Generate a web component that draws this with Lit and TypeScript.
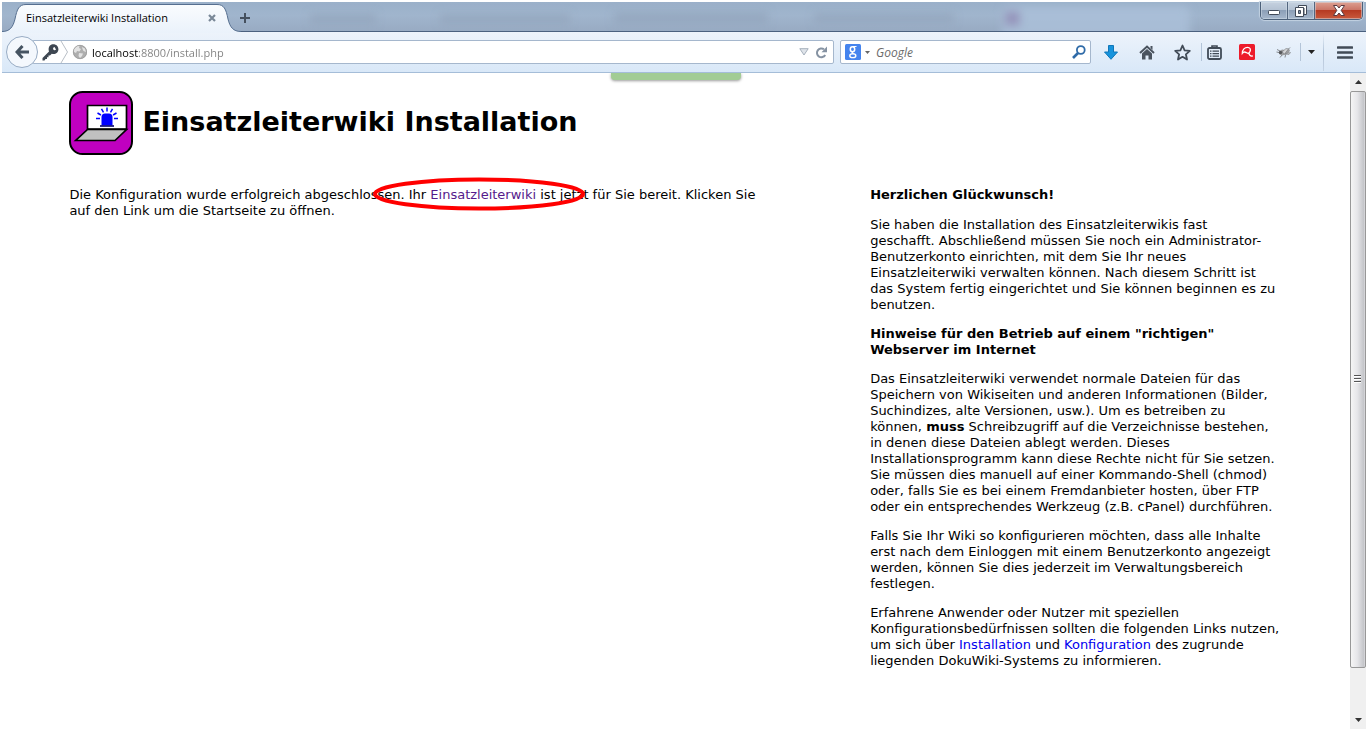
import { LitElement, html, css, svg } from "lit";
import { customElement } from "lit/decorators.js";

@customElement("browser-tabs")
class BrowserTabs extends LitElement {
  static styles = css`
    :host {
      display: flex;
      height: 29px;
      box-sizing: content-box;
      border-bottom: 1px solid #4b617f;
      background: linear-gradient(#9ab0c9, #a0b5cd 45%, #98abc3);
      font: 12px/16px "Noto Sans", sans-serif;
      position: relative;
    }
    .glow {
      position: absolute;
      inset: 0;
      width: 100%;
      height: 100%;
    }
    .tab {
      position: relative;
      display: flex;
      align-items: center;
      width: 240px;
      height: 31px;
      box-sizing: border-box;
      padding: 0 20px 0 24px;
    }
    .shape {
      position: absolute;
      left: 0;
      top: 0;
    }
    .title {
      position: relative;
      flex: 1;
      white-space: nowrap;
      font-family: "Open Sans", sans-serif;
      font-size: 11px;
      color: #000;
    }
    button {
      position: relative;
      border: 0;
      padding: 0;
      background: none;
      display: grid;
      place-items: center;
    }
    .close {
      width: 20px;
      height: 20px;
    }
    .plus {
      width: 12px;
      height: 31px;
      margin-left: -3px;
    }
    .controls {
      position: relative;
      display: flex;
      margin-left: auto;
      margin-right: 3px;
      height: 17px;
      border: 1px solid #4c6079;
      border-top: 0;
      border-radius: 0 0 5px 5px;
      overflow: hidden;
      box-shadow: 0 0 1px 1px #c3d2e2;
    }
    .controls button {
      width: 27px;
      height: 17px;
      border-right: 1px solid #53667f;
      background: linear-gradient(#c5d1df, #b4c2d3 45%, #8c9fb7 50%, #a6b7cc);
      box-shadow: inset 0 0 0 1px #d4dfea80;
    }
    .controls .exit {
      width: 47px;
      border-right: 0;
      background: linear-gradient(#dda193, #cb7668 45%, #b63a22 50%, #c95a3d);
    }
    .controls .min {
      padding-top: 4px;
    }
  `;
  render() {
    return html`
      <svg class="glow" aria-hidden="true">
        <defs><filter id="b"><feGaussianBlur stdDeviation="4" /></filter></defs>
        <g filter="url(#b)">
          <rect x="1000" y="4" width="188" height="34" rx="8" fill="#abc0da" opacity=".8" />
          <rect x="1003" y="9" width="15" height="15" fill="#9594bb" />
          <rect x="308" y="12" width="66" height="10" fill="#91a4bb" opacity=".7" />
          <rect x="438" y="12" width="130" height="10" fill="#91a4bb" opacity=".7" />
          <rect x="612" y="10" width="154" height="12" fill="#91a4bb" opacity=".7" />
          <rect x="812" y="11" width="140" height="10" fill="#91a4bb" opacity=".7" />
        </g>
      </svg>
      <div class="tab">
        <svg class="shape" width="240" height="31" viewBox="0 0 240 31" aria-hidden="true">
          <defs>
            <linearGradient id="t" x2="0" y2="1">
              <stop stop-color="#fafcfe" /><stop offset="1" stop-color="#eaf2fb" />
            </linearGradient>
          </defs>
          <path d="M0 31V29.500C8 29.500 11 25 13 17C15 7 17 2.500 24 2.500H215C222 2.500 224 7 226 17C228 25 231 29.500 239 29.500V31Z" fill="url(#t)" />
          <path d="M0 29.500C8 29.500 11 25 13 17C15 7 17 2.500 24 2.500H215C222 2.500 224 7 226 17C228 25 231 29.500 239 29.500" fill="none" stroke="#566f90" />
        </svg>
        <span class="title">Einsatzleiterwiki Installation</span>
        <button class="close" aria-label="Tab schließen">
          <svg width="8" height="8" viewBox="0 0 8 8"><path d="M1 1L7 7M7 1L1 7" stroke="#7a8898" stroke-width="2.200" /></svg>
        </button>
      </div>
      <button class="plus" aria-label="Neuer Tab">
        <svg width="10" height="10" viewBox="0 0 10 10"><path d="M5 0V10M0 5H10" stroke="#45505e" stroke-width="2" /></svg>
      </button>
      <div class="controls">
        <button class="min" aria-label="Minimieren">
          <svg width="12" height="5"><rect x=".5" y=".5" width="11" height="4" rx="1" fill="#fff" stroke="#414a58" /></svg>
        </button>
        <button aria-label="Verkleinern">
          <svg width="12" height="12" viewBox="0 0 12 12" fill="#fff" stroke="#414a58"><path d="M3.500 .5H11.500V9.500H9V3H3.500Z" /><path d="M.5 2.500H8.500V11.500H.5Z" /><path d="M3.500 5.500H5.500V8.500H3.500Z" fill="#8296b0" /></svg>
        </button>
        <button class="exit" aria-label="Schließen">
          <svg width="12" height="11" viewBox="0 0 12 11"><path d="M.5 .5H4L6 3L8 .5H11.500L8.200 5.400L11.500 10.500H8L6 8L4 10.500H.5L3.800 5.400Z" fill="#fff" stroke="#5a3a40" /></svg>
        </button>
      </div>
    `;
  }
}

@customElement("browser-toolbar")
class BrowserToolbar extends LitElement {
  static styles = css`
    :host {
      display: flex;
      align-items: center;
      height: 40px;
      padding: 0 0 0 4px;
      border-bottom: 1px solid #a5bdd8;
      background: linear-gradient(#edf3fb, #d9e8f8);
      font: 12px/16px "Open Sans", sans-serif;
    }
    svg {
      display: block;
    }
    button {
      border: 0;
      padding: 0;
      background: none;
      display: grid;
      place-items: center;
      flex: none;
    }
    .back {
      position: relative;
      width: 32px;
      height: 32px;
      box-sizing: border-box;
      border: 1px solid #98acc4;
      border-radius: 50%;
      background: #f4f8fd;
      z-index: 1;
    }
    .field {
      display: flex;
      align-items: center;
      height: 24px;
      box-sizing: border-box;
      border: 1px solid #a5b7cd;
      border-radius: 2px;
      background: #fff;
    }
    .url {
      flex: 1;
      margin-left: -6px;
      padding: 0 5px 0 9px;
    }
    .search {
      width: 251px;
      margin-left: 6px;
      padding: 0 4px;
    }
    input {
      flex: 1;
      min-width: 0;
      border: 0;
      outline: 0;
      padding: 0;
      height: 20px;
      font: inherit;
      background: none;
    }
    .address {
      margin-left: 5px;
      font-size: 11px;
      color: transparent;
      background: linear-gradient(90deg, #000 46px, #808080 46px);
      -webkit-background-clip: text;
      background-clip: text;
    }
    .find::placeholder {
      color: #6b6b6b;
      font-style: italic;
      opacity: 1;
    }
    .chev {
      margin: 0 6px 0 4px;
    }
    .drop {
      margin-right: 6px;
    }
    .tools {
      display: flex;
      align-items: center;
      height: 40px;
    }
    .tools button {
      width: 36px;
      height: 24px;
    }
    .tools .wide {
      width: 40px;
    }
    .tools .home {
      width: 32px;
    }
    .tools .star {
      width: 38px;
    }
    .tools .half {
      width: 24px;
    }
    .tools .fly {
      width: 32px;
    }
    .tools .small {
      width: 20px;
    }
    .tools .menu {
      width: 42px;
    }
    .line {
      width: 1px;
      height: 18px;
      background: #b3c4d8;
    }
    .tall {
      height: 38px;
      margin-left: 2px;
      background: linear-gradient(#c5d3e400, #b3c4d8, #c5d3e4);
    }
  `;
  render() {
    return html`
      <button class="back" aria-label="Zurück">
        <svg width="14" height="14" viewBox="0 0 14 14" fill="none" stroke="#465462" stroke-width="3"><path d="M7.500 1L2 7L7.500 13M2.500 7H14" /></svg>
      </button>
      <div class="field url">
        <svg width="17" height="17" viewBox="0 0 17 17">
          <path fill="#3e4752" fill-rule="evenodd" d="M8 1.500C10 -.3 13.500 0 15 1.800C17 4 16.800 7 15 8.800C13.500 10.200 11.500 10.400 9.800 9.800L8 11.500H6.500V13.200H5V15H3.500L2.500 16.500H.5V14L7 7.500C6.300 5.500 6.500 3 8 1.500ZM12.500 3A1.600 1.600 0 1 0 14 5.500Z" />
        </svg>
        <svg width="10" height="22" viewBox="0 0 10 22"><path d="M2 0L8.500 11L2 22" fill="none" stroke="#b8bec6" /></svg>
        <svg width="18" height="16" viewBox="0 0 18 16">
          <circle cx="11" cy="8" r="7" fill="#aeaeae" />
          <path d="M5 5C7 2 9 1.500 10.500 2L10 4L12 5L10.500 7.500L8 7L7 9L5 8ZM13 3L16 4.500L17 8L14.500 7L13.500 5ZM10 9L14 9.500L13 12L11 14L9.500 12Z" fill="#e3e3e3" />
          <circle cx="11" cy="8" r="6.700" fill="none" stroke="#969696" stroke-width=".7" />
        </svg>
        <input class="address" aria-label="Adresse" value="localhost:8800/install.php" />
        <svg class="drop" width="10" height="8" viewBox="0 0 10 8"><path d="M.8 .7H9.200L5 7Z" fill="#dfe4ea" stroke="#a6b0bc" /></svg>
        <button aria-label="Neu laden">
          <svg width="13" height="13" viewBox="0 0 13 13"><path d="M10.200 9A4.400 4.400 0 1 1 9 3.300" fill="none" stroke="#8592a2" stroke-width="2" /><path d="M12 .5V6.200H6.500Z" fill="#8592a2" /></svg>
        </button>
      </div>
      <div class="field search">
        <svg width="16" height="16" viewBox="0 0 16 16">
          <rect width="16" height="16" rx="1.500" fill="#4584ee" />
          <g fill="none" stroke="#fff"><ellipse cx="7.500" cy="5.200" rx="2.200" ry="2.500" stroke-width="1.500" /><path d="M8 2.500H11.500M8.500 7.500C6 8.500 7 9.200 8.500 9.800" stroke-width="1.200" /><ellipse cx="7.800" cy="11.700" rx="3" ry="1.900" stroke-width="1.400" /></g>
        </svg>
        <svg class="chev" width="5" height="3" viewBox="0 0 5 3"><path d="M0 0H5L2.500 3Z" fill="#666" /></svg>
        <input class="find" aria-label="Suche" placeholder="Google" />
        <button aria-label="Suchen">
          <svg width="14" height="14" viewBox="0 0 14 14" fill="none" stroke="#2f6ba8"><circle cx="8.800" cy="5" r="3.900" stroke-width="1.800" /><path d="M6 8L1 13" stroke-width="2.600" /></svg>
        </button>
      </div>
      <div class="tools">
        <button class="wide" aria-label="Downloads">
          <svg width="14" height="15" viewBox="0 0 14 15"><path d="M4.500 .5H9.500V7H13.500L7 14.300L.5 7H4.500Z" fill="#1793dc" stroke="#0f77b9" /></svg>
        </button>
        <button class="home" aria-label="Startseite">
          <svg width="16" height="15" viewBox="0 0 16 15"><path d="M1 8L8 1.500L15 8" fill="none" stroke="#4a535e" stroke-width="2" /><path d="M3 8.500L8 4L13 8.500V14.500H9.500V10.500H6.500V14.500H3ZM11.500 1H13.500V5L11.500 3Z" fill="#4a535e" /></svg>
        </button>
        <button class="star" aria-label="Lesezeichen">
          <svg width="17" height="17" viewBox="0 0 17 17"><path d="M8.500 1.500L10.600 6.300L15.800 6.800L11.900 10.300L13 15.500L8.500 12.800L4 15.500L5.100 10.300L1.200 6.800L6.400 6.300Z" fill="none" stroke="#414b57" stroke-width="1.800" stroke-linejoin="round" /></svg>
        </button>
        <span class="line"></span>
        <button class="half" aria-label="Lesezeichen anzeigen">
          <svg width="15" height="15" viewBox="0 0 15 15" fill="none" stroke="#414b57"><rect x="1" y="3" width="13" height="11" rx="1.500" stroke-width="1.800" /><path d="M5 2.800V1H10V2.800" stroke-width="1.600" /><path d="M3 6.200H4.500M5.500 6.200H12M3 8.700H4.500M5.500 8.700H12M3 11.200H4.500M5.500 11.200H12" stroke-width="1.300" /></svg>
        </button>
        <button class="menu" aria-label="Avira">
          <svg width="16" height="16" viewBox="0 0 16 16"><rect width="16" height="16" rx="1.500" fill="#ed1b2b" /><path d="M3.300 9.300C3.300 5.500 5.800 3.300 8.500 3.300C11 3.300 12 5.200 11 7.500C10.200 9.300 8.800 9.800 7.300 8.600C5.800 7.600 4.300 8 3.300 9.300ZM9.800 8.800C10.300 11 11.300 12.300 13.300 12" fill="none" stroke="#fff" stroke-width="1.300" stroke-linecap="round" /></svg>
        </button>
        <button class="fly" aria-label="Erweiterung">
          <svg width="16" height="13" viewBox="0 0 16 13"><path d="M3 5.500L6 3.500L9 4L12 2.500L14 4L13 6.500L10 8.500L6 9.500L3 8Z" fill="#9b9c9e" /><path d="M6 6L10 2.500L12.500 3L8.500 8ZM9 8L14.500 6.500L13 8.500Z" fill="#d3d4d5" stroke="#77797c" stroke-width=".6" /><circle cx="4.500" cy="6.500" r="1.700" fill="#55575a" /><path d="M1 3.500L4 5M.5 6L3 6.500M6 9L4 11.500M9.500 9L9 11.500M12.500 3L14 1.500" stroke="#6c6e71" stroke-width=".8" /></svg>
        </button>
        <span class="line"></span>
        <button class="small" aria-label="Weitere">
          <svg width="7" height="4" viewBox="0 0 7 4"><path d="M0 0H7L3.500 4Z" fill="#222" /></svg>
        </button>
        <span class="line tall"></span>
        <button class="menu" aria-label="Menü">
          <svg width="16" height="13" viewBox="0 0 16 13"><path d="M1 1.500H15M1 6.500H15M1 11.500H15" stroke="#414b57" stroke-width="2.600" stroke-linecap="round" /></svg>
        </button>
      </div>
    `;
  }
}

const rays = [-90, -60, -30, 0, 30, 60, 90].map(
  (a) => svg`<path d="M38 20.500V16.500" transform="rotate(${a} 38 27.500)" />`
);

@customElement("app-root")
class AppRoot extends LitElement {
  static styles = css`
    :host {
      display: flex;
      flex-direction: column;
      height: 100vh;
      box-sizing: border-box;
      padding: 2px 3px 3px 2px;
      background: #fff;
      overflow: hidden;
    }
    .view {
      flex: 1;
      min-height: 0;
      display: flex;
      position: relative;
    }
    .notice {
      position: absolute;
      top: 0;
      left: 609px;
      width: 130px;
      height: 7px;
      border-radius: 0 0 4px 4px;
      background: #a2cc94;
      box-shadow: 0 1px 3px #0006;
      clip-path: inset(0 -6px -6px -6px);
    }
    main {
      flex: 1;
    }
    .page {
      padding: 18px 5% 0;
      font: 13px/16px Verdana, "DejaVu Sans", sans-serif;
      color: #000;
    }
    header {
      display: flex;
      align-items: center;
      gap: 9px;
      margin-bottom: 32px;
    }
    h1 {
      margin: 0;
      font-size: 27px;
      line-height: 32px;
      padding-bottom: 2px;
    }
    .columns {
      display: grid;
      grid-template-columns: 58% 34%;
      justify-content: space-between;
    }
    p,
    h2 {
      margin: 0 0 13px;
      font-size: 13px;
      line-height: 16px;
    }
    h2:first-child {
      margin-bottom: 14px;
    }
    a {
      color: #0000ee;
      text-decoration: none;
    }
    .visited {
      position: relative;
      color: #551a8b;
    }
    .ring {
      position: absolute;
      left: -59px;
      top: -11px;
      pointer-events: none;
    }
    .scroll {
      width: 16px;
      display: flex;
      flex-direction: column;
      align-items: center;
      background: #f0f0f0;
    }
    .arrow {
      width: 16px;
      height: 18px;
      display: grid;
      place-items: center;
      border: 0;
      padding: 0;
      background: none;
    }
    .track {
      flex: 1;
      align-self: stretch;
      display: flex;
    }
    .thumb {
      flex: 1;
      height: 93%;
      box-sizing: border-box;
      border: 1px solid #989898;
      border-radius: 2px;
      background: linear-gradient(90deg, #f5f5f5, #e6e6e9 45%, #c5c6ca 90%, #dcdcdf);
      display: grid;
      place-items: center;
    }
  `;
  render() {
    return html`
      <browser-tabs></browser-tabs>
      <browser-toolbar></browser-toolbar>
      <div class="view">
        <div class="notice"></div>
        <main><div class="page">
          <header>
            <svg width="64" height="64" viewBox="0 0 64 64" role="img" aria-label="Logo">
              <rect x="1" y="1" width="62" height="62" rx="12.500" fill="#c000c0" stroke="#000" stroke-width="2" />
              <path d="M18.500 14.500H57.500V38H18.500Z" fill="#fff" stroke="#000" stroke-width="1.700" />
              <path d="M18.500 38.500H57.500L46 49.500H6.700Z" fill="#c0c0c0" stroke="#000" stroke-width="1.700" />
              <path d="M32.500 34.500V26Q32.500 22.500 36 22.500H40Q43.500 22.500 43.500 26V34.500Z" fill="#00f" />
              <path d="M31 35H45" stroke="#00006e" stroke-width="1.600" />
              <g stroke="#00f" stroke-width="1.500">${rays}</g>
            </svg>
            <h1>Einsatzleiterwiki Installation</h1>
          </header>
          <div class="columns">
            <section>
              <p>
                Die Konfiguration wurde erfolgreich abgeschlossen. Ihr
                <a class="visited" href="#">Einsatzleiterwiki<svg class="ring" width="216" height="36" viewBox="0 0 216 36" aria-hidden="true"><ellipse cx="108" cy="18" rx="104" ry="14.500" fill="none" stroke="#f00" stroke-width="4" /></svg></a>
                ist jetzt für Sie bereit. Klicken Sie auf den Link um die Startseite zu öffnen.
              </p>
            </section>
            <aside>
              <h2>Herzlichen Glückwunsch!</h2>
              <p>
                Sie haben die Installation des Einsatzleiterwikis fast<br />
                geschafft. Abschließend müssen Sie noch ein
                Administrator-Benutzerkonto einrichten, mit dem Sie Ihr neues Einsatzleiterwiki verwalten können. Nach
                diesem Schritt ist das System fertig eingerichtet und Sie können beginnen es zu benutzen.
              </p>
              <h2>Hinweise für den Betrieb auf einem "richtigen" Webserver im Internet</h2>
              <p>
                Das Einsatzleiterwiki verwendet normale Dateien für das Speichern von Wikiseiten und anderen
                Informationen (Bilder, Suchindizes, alte Versionen, usw.). Um es betreiben zu<br />
                können, <b>muss</b> Schreibzugriff auf die Verzeichnisse bestehen, in denen diese Dateien ablegt werden.
                Dieses Installationsprogramm kann diese Rechte nicht für Sie setzen. Sie müssen dies manuell auf einer
                Kommando-Shell (chmod) oder, falls Sie es bei einem Fremdanbieter hosten, über FTP oder ein
                entsprechendes Werkzeug (z.B. cPanel) durchführen.
              </p>
              <p>
                Falls Sie Ihr Wiki so konfigurieren möchten, dass alle Inhalte erst nach dem Einloggen mit einem
                Benutzerkonto angezeigt werden, können Sie dies jederzeit im Verwaltungsbereich festlegen.
              </p>
              <p>
                Erfahrene Anwender oder Nutzer mit speziellen Konfigurationsbedürfnissen sollten die folgenden Links
                nutzen, um sich über <a href="#">Installation</a> und <a href="#">Konfiguration</a> des zugrunde
                liegenden DokuWiki-Systems zu informieren.
              </p>
            </aside>
          </div>
        </div></main>
        <div class="scroll">
          <button class="arrow" aria-label="Nach oben"><svg width="7" height="4"><path d="M0 4H7L3.500 0Z" fill="#333" /></svg></button>
          <div class="track">
            <div class="thumb"><svg width="8" height="8"><path d="M0 .5H7M0 3.500H7M0 6.500H7" stroke="#555" /><path d="M0 1.500H7M0 4.500H7M0 7.500H7" stroke="#fff" /></svg></div>
          </div>
          <button class="arrow" aria-label="Nach unten"><svg width="7" height="4"><path d="M0 0H7L3.500 4Z" fill="#333" /></svg></button>
        </div>
      </div>
    `;
  }
}
